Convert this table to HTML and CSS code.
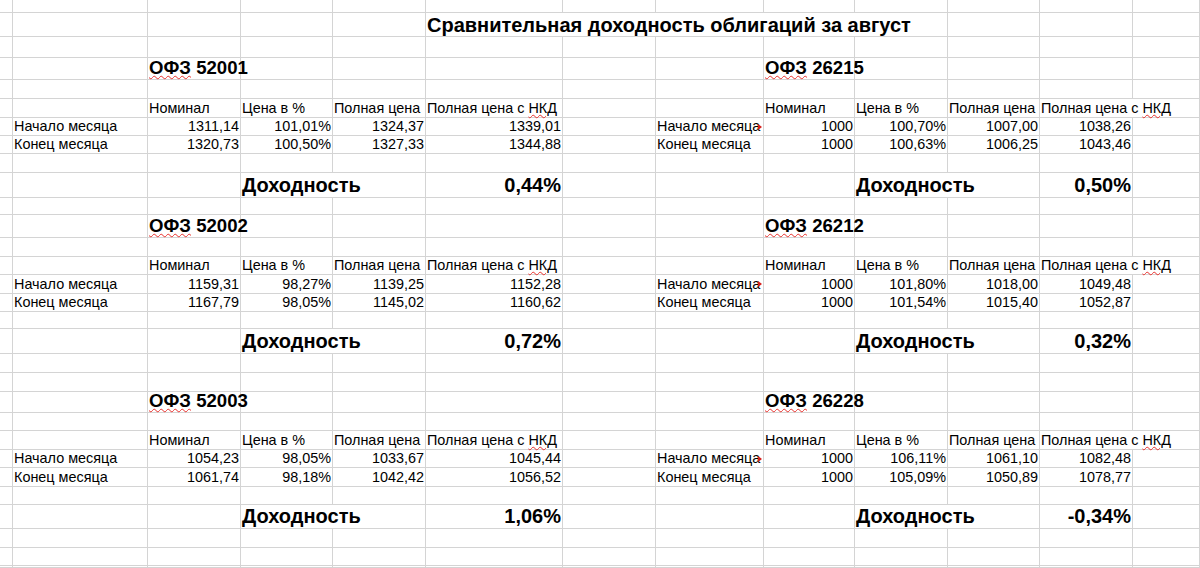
FILE: index.html
```html
<!DOCTYPE html>
<html lang="ru">
<head>
<meta charset="utf-8">
<title>Сравнительная доходность облигаций за август</title>
<link rel="stylesheet" href="styles.css">
</head>
<body>
<div class="sheet">
<!-- R0 -->
<div class="c"></div><div class="c"></div><div class="c"></div><div class="c"></div><div class="c"></div><div class="c"></div><div class="c"></div><div class="c"></div><div class="c"></div><div class="c"></div><div class="c"></div><div class="c"></div><div class="c"></div>
<!-- R1 -->
<div class="c"></div><div class="c"></div><div class="c"></div><div class="c"></div><div class="c"></div><div class="c ov title"><span class="ovt">Сравнительная доходность облигаций за август</span></div><div class="c"></div><div class="c"></div><div class="c"></div><div class="c"></div><div class="c"></div><div class="c"></div><div class="c"></div>
<!-- R2 -->
<div class="c"></div><div class="c"></div><div class="c"></div><div class="c"></div><div class="c"></div><div class="c"></div><div class="c"></div><div class="c"></div><div class="c"></div><div class="c"></div><div class="c"></div><div class="c"></div><div class="c"></div>
<!-- R3 -->
<div class="c"></div><div class="c"></div><div class="c head"><span><span class="sp">ОФЗ</span> 52001</span></div><div class="c"></div><div class="c"></div><div class="c"></div><div class="c"></div><div class="c"></div><div class="c head"><span><span class="sp">ОФЗ</span> 26215</span></div><div class="c"></div><div class="c"></div><div class="c"></div><div class="c"></div>
<!-- R4 -->
<div class="c"></div><div class="c"></div><div class="c"></div><div class="c"></div><div class="c"></div><div class="c"></div><div class="c"></div><div class="c"></div><div class="c"></div><div class="c"></div><div class="c"></div><div class="c"></div><div class="c"></div>
<!-- R5 -->
<div class="c"></div><div class="c"></div><div class="c">Номинал</div><div class="c">Цена в %</div><div class="c">Полная цена</div><div class="c"><span>Полная цена с <span class="sp">НКД</span></span></div><div class="c"></div><div class="c"></div><div class="c">Номинал</div><div class="c">Цена в %</div><div class="c">Полная цена</div><div class="c ov"><span class="ovt">Полная цена с&nbsp;<span class="sp">НКД</span></span></div><div class="c"></div>
<!-- R6 -->
<div class="c"></div><div class="c">Начало месяца</div><div class="c n">1311,14</div><div class="c n">101,01%</div><div class="c n">1324,37</div><div class="c n">1339,01</div><div class="c"></div><div class="c clip">Начало месяца</div><div class="c n">1000</div><div class="c n">100,70%</div><div class="c n">1007,00</div><div class="c n">1038,26</div><div class="c"></div>
<!-- R7 -->
<div class="c"></div><div class="c">Конец месяца</div><div class="c n">1320,73</div><div class="c n">100,50%</div><div class="c n">1327,33</div><div class="c n">1344,88</div><div class="c"></div><div class="c">Конец месяца</div><div class="c n">1000</div><div class="c n">100,63%</div><div class="c n">1006,25</div><div class="c n">1043,46</div><div class="c"></div>
<!-- R8 -->
<div class="c"></div><div class="c"></div><div class="c"></div><div class="c"></div><div class="c"></div><div class="c"></div><div class="c"></div><div class="c"></div><div class="c"></div><div class="c"></div><div class="c"></div><div class="c"></div><div class="c"></div>
<!-- R9 -->
<div class="c"></div><div class="c"></div><div class="c"></div><div class="c ov big"><span class="ovt">Доходность</span></div><div class="c"></div><div class="c big n">0,44%</div><div class="c"></div><div class="c"></div><div class="c"></div><div class="c ov big"><span class="ovt">Доходность</span></div><div class="c"></div><div class="c big n">0,50%</div><div class="c"></div>
<!-- R10 -->
<div class="c"></div><div class="c"></div><div class="c"></div><div class="c"></div><div class="c"></div><div class="c"></div><div class="c"></div><div class="c"></div><div class="c"></div><div class="c"></div><div class="c"></div><div class="c"></div><div class="c"></div>
<!-- R11 -->
<div class="c"></div><div class="c"></div><div class="c head"><span><span class="sp">ОФЗ</span> 52002</span></div><div class="c"></div><div class="c"></div><div class="c"></div><div class="c"></div><div class="c"></div><div class="c head"><span><span class="sp">ОФЗ</span> 26212</span></div><div class="c"></div><div class="c"></div><div class="c"></div><div class="c"></div>
<!-- R12 -->
<div class="c"></div><div class="c"></div><div class="c"></div><div class="c"></div><div class="c"></div><div class="c"></div><div class="c"></div><div class="c"></div><div class="c"></div><div class="c"></div><div class="c"></div><div class="c"></div><div class="c"></div>
<!-- R13 -->
<div class="c"></div><div class="c"></div><div class="c">Номинал</div><div class="c">Цена в %</div><div class="c">Полная цена</div><div class="c"><span>Полная цена с <span class="sp">НКД</span></span></div><div class="c"></div><div class="c"></div><div class="c">Номинал</div><div class="c">Цена в %</div><div class="c">Полная цена</div><div class="c ov"><span class="ovt">Полная цена с&nbsp;<span class="sp">НКД</span></span></div><div class="c"></div>
<!-- R14 -->
<div class="c"></div><div class="c">Начало месяца</div><div class="c n">1159,31</div><div class="c n">98,27%</div><div class="c n">1139,25</div><div class="c n">1152,28</div><div class="c"></div><div class="c clip">Начало месяца</div><div class="c n">1000</div><div class="c n">101,80%</div><div class="c n">1018,00</div><div class="c n">1049,48</div><div class="c"></div>
<!-- R15 -->
<div class="c"></div><div class="c">Конец месяца</div><div class="c n">1167,79</div><div class="c n">98,05%</div><div class="c n">1145,02</div><div class="c n">1160,62</div><div class="c"></div><div class="c">Конец месяца</div><div class="c n">1000</div><div class="c n">101,54%</div><div class="c n">1015,40</div><div class="c n">1052,87</div><div class="c"></div>
<!-- R16 -->
<div class="c"></div><div class="c"></div><div class="c"></div><div class="c"></div><div class="c"></div><div class="c"></div><div class="c"></div><div class="c"></div><div class="c"></div><div class="c"></div><div class="c"></div><div class="c"></div><div class="c"></div>
<!-- R17 -->
<div class="c"></div><div class="c"></div><div class="c"></div><div class="c ov big"><span class="ovt">Доходность</span></div><div class="c"></div><div class="c big n">0,72%</div><div class="c"></div><div class="c"></div><div class="c"></div><div class="c ov big"><span class="ovt">Доходность</span></div><div class="c"></div><div class="c big n">0,32%</div><div class="c"></div>
<!-- R18 -->
<div class="c"></div><div class="c"></div><div class="c"></div><div class="c"></div><div class="c"></div><div class="c"></div><div class="c"></div><div class="c"></div><div class="c"></div><div class="c"></div><div class="c"></div><div class="c"></div><div class="c"></div>
<!-- R19 -->
<div class="c"></div><div class="c"></div><div class="c"></div><div class="c"></div><div class="c"></div><div class="c"></div><div class="c"></div><div class="c"></div><div class="c"></div><div class="c"></div><div class="c"></div><div class="c"></div><div class="c"></div>
<!-- R20 -->
<div class="c"></div><div class="c"></div><div class="c head"><span><span class="sp">ОФЗ</span> 52003</span></div><div class="c"></div><div class="c"></div><div class="c"></div><div class="c"></div><div class="c"></div><div class="c head"><span><span class="sp">ОФЗ</span> 26228</span></div><div class="c"></div><div class="c"></div><div class="c"></div><div class="c"></div>
<!-- R21 -->
<div class="c"></div><div class="c"></div><div class="c"></div><div class="c"></div><div class="c"></div><div class="c"></div><div class="c"></div><div class="c"></div><div class="c"></div><div class="c"></div><div class="c"></div><div class="c"></div><div class="c"></div>
<!-- R22 -->
<div class="c"></div><div class="c"></div><div class="c">Номинал</div><div class="c">Цена в %</div><div class="c">Полная цена</div><div class="c"><span>Полная цена с <span class="sp">НКД</span></span></div><div class="c"></div><div class="c"></div><div class="c">Номинал</div><div class="c">Цена в %</div><div class="c">Полная цена</div><div class="c ov"><span class="ovt">Полная цена с&nbsp;<span class="sp">НКД</span></span></div><div class="c"></div>
<!-- R23 -->
<div class="c"></div><div class="c">Начало месяца</div><div class="c n">1054,23</div><div class="c n">98,05%</div><div class="c n">1033,67</div><div class="c n">1045,44</div><div class="c"></div><div class="c clip">Начало месяца</div><div class="c n">1000</div><div class="c n">106,11%</div><div class="c n">1061,10</div><div class="c n">1082,48</div><div class="c"></div>
<!-- R24 -->
<div class="c"></div><div class="c">Конец месяца</div><div class="c n">1061,74</div><div class="c n">98,18%</div><div class="c n">1042,42</div><div class="c n">1056,52</div><div class="c"></div><div class="c">Конец месяца</div><div class="c n">1000</div><div class="c n">105,09%</div><div class="c n">1050,89</div><div class="c n">1078,77</div><div class="c"></div>
<!-- R25 -->
<div class="c"></div><div class="c"></div><div class="c"></div><div class="c"></div><div class="c"></div><div class="c"></div><div class="c"></div><div class="c"></div><div class="c"></div><div class="c"></div><div class="c"></div><div class="c"></div><div class="c"></div>
<!-- R26 -->
<div class="c"></div><div class="c"></div><div class="c"></div><div class="c ov big"><span class="ovt">Доходность</span></div><div class="c"></div><div class="c big n">1,06%</div><div class="c"></div><div class="c"></div><div class="c"></div><div class="c ov big"><span class="ovt">Доходность</span></div><div class="c"></div><div class="c big n">-0,34%</div><div class="c"></div>
<!-- R27 -->
<div class="c"></div><div class="c"></div><div class="c"></div><div class="c"></div><div class="c"></div><div class="c"></div><div class="c"></div><div class="c"></div><div class="c"></div><div class="c"></div><div class="c"></div><div class="c"></div><div class="c"></div>
<!-- R28 -->
<div class="c"></div><div class="c"></div><div class="c"></div><div class="c"></div><div class="c"></div><div class="c"></div><div class="c"></div><div class="c"></div><div class="c"></div><div class="c"></div><div class="c"></div><div class="c"></div><div class="c"></div>
<!-- R29 -->
<div class="c"></div><div class="c"></div><div class="c"></div><div class="c"></div><div class="c"></div><div class="c"></div><div class="c"></div><div class="c"></div><div class="c"></div><div class="c"></div><div class="c"></div><div class="c"></div><div class="c"></div>
</div>
</body>
</html>
```
FILE: styles.css
```css
html, body {
  margin: 0;
  padding: 0;
  background: #ffffff;
}

body {
  width: 1200px;
  height: 568px;
  overflow: hidden;
  font-family: "Liberation Sans", Arial, sans-serif;
  color: #000000;
}

.sheet {
  display: grid;
  grid-template-columns: 13px 135px 93px 92px 93px 137px 93px 108px 91px 93px 92px 93px 67px;
  grid-template-rows: 13px 24px 21px 22px 19px 19px 18px 18px 19px 25px 17px 23px 19px 18px 19px 18px 17px 25px 19px 19px 21px 18px 19px 18px 19px 18px 24px 19px 18px 2px;
}

.c {
  box-sizing: border-box;
  border-right: 1px solid #d4d4d4;
  border-bottom: 1px solid #d4d4d4;
  display: flex;
  align-items: flex-end;
  justify-content: flex-start;
  padding: 0 1px 1px 1px;
  font-size: 14.4px;
  line-height: 16px;
  white-space: nowrap;
  min-width: 0;
}

.n {
  justify-content: flex-end;
}

/* text that spills over neighbouring cells hides their grid lines */
.c.ov {
  padding-bottom: 0;
}

.ovt {
  align-self: stretch;
  display: flex;
  align-items: flex-end;
  position: relative;
  z-index: 1;
  background: #ffffff;
  padding: 0 2px 1px 0;
}

.title {
  font-weight: bold;
  font-size: 20px;
  line-height: 22px;
}

.title .ovt {
  padding-bottom: 0;
}

.head {
  font-weight: bold;
  font-size: 18.6px;
  line-height: 20px;
  padding-bottom: 1px;
}

.big {
  font-weight: bold;
  font-size: 20px;
  line-height: 22px;
}

.big.n {
  padding-bottom: 1px;
}

.sp {
  text-decoration-line: underline;
  text-decoration-style: wavy;
  text-decoration-color: #e8302c;
  text-decoration-thickness: 1px;
  text-underline-offset: 1px;
}

.clip {
  position: relative;
  overflow: hidden;
}

.clip::after {
  content: "";
  position: absolute;
  right: 1px;
  top: 6px;
  width: 0;
  height: 0;
  border-left: 4px solid #d6201c;
  border-top: 3px solid transparent;
  border-bottom: 3px solid transparent;
}
```
